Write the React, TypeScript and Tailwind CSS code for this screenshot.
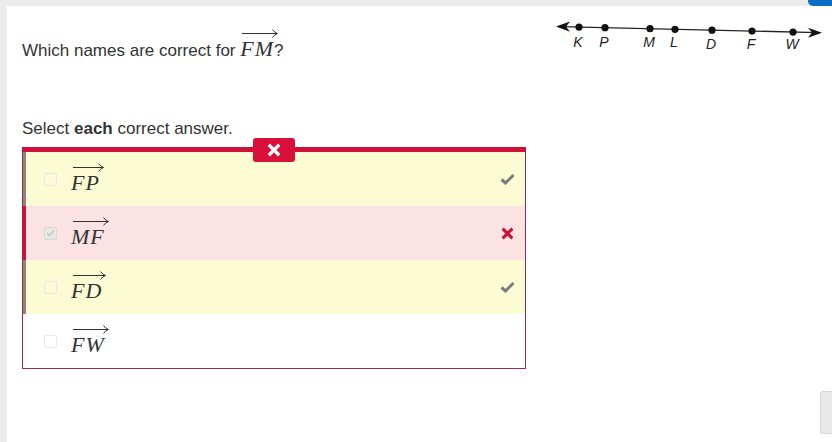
import React from "react";

type Mark = "check" | "cross" | null;

interface Choice {
  id: string;
  label: string;
  bg: string;
  bar: string;
  checked: boolean;
  mark: Mark;
}

const choices: Choice[] = [
  { id: "fp", label: "FP", bg: "bg-[#fbfbd4]", bar: "border-[#8e847a]", checked: false, mark: "check" },
  { id: "mf", label: "MF", bg: "bg-[#fbe3e4]", bar: "border-[#d0103a]", checked: true, mark: "cross" },
  { id: "fd", label: "FD", bg: "bg-[#fbfbd4]", bar: "border-[#8e847a]", checked: false, mark: "check" },
  { id: "fw", label: "FW", bg: "bg-white", bar: "border-white", checked: false, mark: null },
];

const Ray = ({ name }: { name: string }) => (
  <span className="relative inline-block leading-none text-[22px] italic text-[#333] font-['Liberation_Serif',serif] tracking-[1px]">
    {name}
    <span className="absolute left-[2px] right-[-3px] top-[-5px] h-px bg-[#333]" />
    <svg className="absolute right-[-4px] top-[-9px]" width="6" height="9" viewBox="0 0 6 9">
      <path d="M0.5 0.5 Q2.5 3.5 5.5 4.5 Q2.5 5.5 0.5 8.5" fill="none" stroke="#333" strokeWidth="1" />
    </svg>
  </span>
);

const NumberLine = () => {
  const pts: [string, number][] = [
    ["K", 29],
    ["P", 55],
    ["M", 100],
    ["L", 125],
    ["D", 162],
    ["F", 202],
    ["W", 243],
  ];
  const yAt = (x: number) => 10.5 + (x - 6) * 0.0234;
  return (
    <svg width="280" height="40" viewBox="0 0 280 40" className="shrink-0 mr-[2px]">
      <line x1="10" y1={yAt(10)} x2="268" y2={yAt(268)} stroke="#222" strokeWidth="1.4" />
      <path d="M6 10.5 L20 5.5 L16 10.8 L20 15.8 Z" fill="#111" />
      <path d="M272 16.7 L258 11.7 L262 16.5 L258 21.7 Z" fill="#111" />
      {pts.map(([n, x]) => (
        <g key={n}>
          <circle cx={x} cy={yAt(x)} r="3.6" fill="#111" />
          <text
            x={x - 1}
            y={n === "K" || n === "P" || n === "M" || n === "L" ? 31 : 33}
            textAnchor="middle"
            fontSize="14"
            fontStyle="italic"
            fontFamily="Liberation Sans, Arial, sans-serif"
            fill="#222"
          >
            {n}
          </text>
        </g>
      ))}
    </svg>
  );
};

const CheckIcon = () => (
  <svg width="15" height="12" viewBox="0 0 15 12">
    <path d="M1.5 6.5 L5.5 10 L13.5 2" fill="none" stroke="#7a7a7a" strokeWidth="3" />
  </svg>
);

const CrossIcon = ({ color, size }: { color: string; size: number }) => (
  <svg width={size} height={size} viewBox="0 0 12 12">
    <path d="M1.5 1.5 L10.5 10.5 M10.5 1.5 L1.5 10.5" fill="none" stroke={color} strokeWidth="2.8" />
  </svg>
);

export default function App() {
  return (
    <div className="relative w-[832px] h-[442px] overflow-hidden bg-[#ececec] font-['Liberation_Sans',Arial,sans-serif]">
      <div className="absolute right-0 top-[-6px] w-[24px] h-[12px] rounded-bl-[5px] bg-[#0a6cc4]" />
      <div className="ml-[7px] mt-[6px] h-full bg-white pl-[15px] pt-[10px]">
        <div className="flex items-start justify-between">
          <p className="pt-[22px] text-[17px] leading-[24px] text-[#333]">
            Which names are correct for <Ray name="FM" />?
          </p>
          <NumberLine />
        </div>

        <p className="mt-[54px] text-[17px] leading-[24px] text-[#333]">
          Select <span className="font-bold">each</span> correct answer.
        </p>

        <div className="relative mt-[6px] w-[504px] border-x border-b border-t-[5px] border-x-[#a3284c] border-b-[#a3284c] border-t-[#d0103a]">
          <div className="absolute left-1/2 top-[-14px] flex h-[24px] w-[42px] -translate-x-1/2 items-center justify-center rounded-[3px] bg-[#d9103a]">
            <CrossIcon color="#fff" size={14} />
          </div>
          {choices.map((c) => (
            <div key={c.id} className={`flex h-[54px] items-center border-l-[3px] ${c.bar} ${c.bg}`}>
              <span
                className={`ml-[18px] flex h-[13px] w-[13px] items-center justify-center rounded-[2px] border ${
                  c.checked ? "border-[#dadada] bg-[#e8e8e8]" : "border-[#e8e8e8] bg-transparent"
                }`}
              >
                {c.checked && (
                  <svg width="9" height="8" viewBox="0 0 9 8">
                    <path d="M1 4 L3.5 6.5 L8 1.5" fill="none" stroke="#c8c8c8" strokeWidth="1.6" />
                  </svg>
                )}
              </span>
              <span className="ml-[14px] mt-[10px]">
                <Ray name={c.label} />
              </span>
              <span className="ml-auto mr-[10px] flex w-[16px] justify-center">
                {c.mark === "check" && <CheckIcon />}
                {c.mark === "cross" && <CrossIcon color="#d0103a" size={13} />}
              </span>
            </div>
          ))}
        </div>
      </div>
      <div className="absolute right-0 top-[391px] h-[43px] w-[12px] rounded-l-[3px] border border-r-0 border-[#d5d5d5] bg-[#e9e9e9]" />
    </div>
  );
}
